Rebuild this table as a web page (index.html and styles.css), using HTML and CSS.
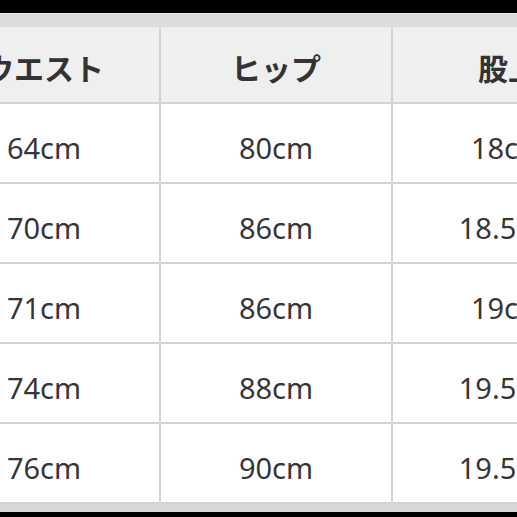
FILE: index.html
```html
<!DOCTYPE html>
<html lang="ja">
<head>
<meta charset="utf-8">
<title>サイズ表</title>
<link rel="stylesheet" href="styles.css">
</head>
<body>
<div class="frame">
  <div class="bar-top"></div>
  <div class="band-top"></div>
  <div class="table">
    <div class="cell head">ウエスト</div>
    <div class="cell head">ヒップ</div>
    <div class="cell head">股上</div>

    <div class="cell">64cm</div>
    <div class="cell">80cm</div>
    <div class="cell">18cm</div>

    <div class="cell">70cm</div>
    <div class="cell">86cm</div>
    <div class="cell">18.5cm</div>

    <div class="cell">71cm</div>
    <div class="cell">86cm</div>
    <div class="cell">19cm</div>

    <div class="cell">74cm</div>
    <div class="cell">88cm</div>
    <div class="cell">19.5cm</div>

    <div class="cell">76cm</div>
    <div class="cell">90cm</div>
    <div class="cell">19.5cm</div>
  </div>
  <div class="band-bottom"></div>
  <div class="bar-bottom"></div>
</div>
</body>
</html>
```

FILE: styles.css
```css
html, body {
  margin: 0;
  padding: 0;
  background: #000;
}
body {
  width: 517px;
  height: 517px;
  overflow: hidden;
}
.frame {
  width: 517px;
  height: 517px;
  overflow: hidden;
  display: flex;
  flex-direction: column;
  background: #fff;
}
.bar-top {
  height: 13px;
  background: #000;
  flex: none;
}
.band-top {
  height: 13px;
  flex: none;
  background: #dcdcdc;
  border-top: 1px solid #ececec;
}
.table {
  flex: none;
  margin-left: -71px;
  width: 694px;
  display: grid;
  grid-template-columns: repeat(3, 230px);
  grid-template-rows: 75px repeat(5, 78px);
  gap: 2px;
  background: #d3d3d3;
  border-bottom: 2px solid #d3d3d3;
}
.cell {
  background: #fff;
  display: flex;
  align-items: center;
  justify-content: center;
  padding-top: 9px;
  box-sizing: border-box;
  font-family: "Noto Sans", "Open Sans", sans-serif;
  font-size: 29px;
  color: #363636;
}
.cell.head {
  background: #efefef;
  padding-top: 4px;
  font-family: "Noto Sans CJK JP", sans-serif;
  font-weight: 700;
  font-size: 30px;
  color: #333;
}
.band-bottom {
  height: 8px;
  flex: none;
  background: #d8d8d8;
}
.bar-bottom {
  flex: 1;
  background: #000;
}
```
